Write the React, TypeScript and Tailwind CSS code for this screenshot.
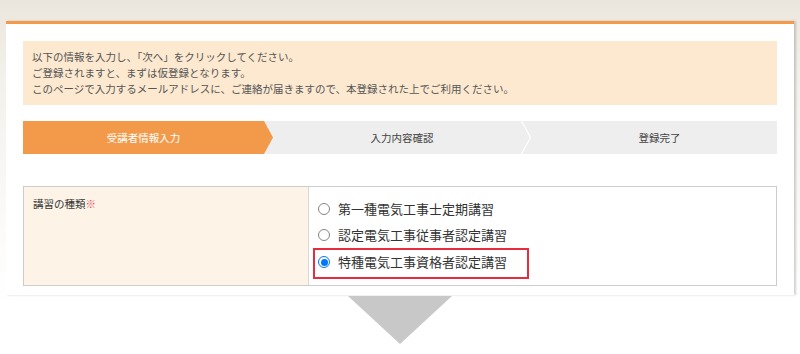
import React from "react";

const font = { fontFamily: '"Noto Sans CJK JP", "Noto Sans", sans-serif' };

function Radio({ checked }: { checked?: boolean }) {
  return checked ? (
    <span className="w-[12px] h-[12px] rounded-full border border-[#0075ff] bg-white flex items-center justify-center shrink-0">
      <span className="w-[7px] h-[7px] rounded-full bg-[#0075ff]" />
    </span>
  ) : (
    <span className="w-[12px] h-[12px] rounded-full border border-[#858585] bg-white shrink-0" />
  );
}

export default function App() {
  return (
    <div
      className="w-[800px] h-[354px] overflow-hidden bg-[linear-gradient(to_bottom,#ebe6dd_0px,#f4f1ec_80px,#ffffff_300px)] pt-[21px] px-[6px]"
      style={font}
    >
      <div className="bg-white border-t-[3px] border-[#f39a4a] shadow-[2px_0_2px_rgba(0,0,0,0.18)] px-[17px] pt-[17px] pb-[9px]">
        <div className="bg-[#fce9d0] h-[64px] px-[9px] py-[8px] text-[10.5px] leading-[16px] text-[#555]">
          <p>以下の情報を入力し、「次へ」をクリックしてください。</p>
          <p>ご登録されますと、まずは仮登録となります。</p>
          <p>このページで入力するメールアドレスに、ご連絡が届きますので、本登録された上でご利用ください。</p>
        </div>

        <div className="mt-[16px] h-[33px] bg-[#eeeeee] flex text-[10.5px]">
          <div className="w-[250px] h-full bg-[#f39a4a] [clip-path:polygon(0_0,241px_0,100%_50%,241px_100%,0_100%)] flex items-center justify-center pr-[9px] text-white">
            受講者情報入力
          </div>
          <div className="relative w-[258px] h-full flex items-center justify-center text-[#444]">
            入力内容確認
            <svg className="absolute right-0 top-0" width="10" height="33" viewBox="0 0 10 33">
              <polyline points="0.5,0 9.5,16.5 0.5,33" fill="none" stroke="#ffffff" strokeWidth="1.2" />
            </svg>
          </div>
          <div className="flex-1 h-full flex items-center justify-center pl-[11px] text-[#444]">
            登録完了
          </div>
        </div>

        <div className="mt-[32px] border border-[#cccccc] flex h-[100px]">
          <div className="w-[285px] bg-[#fdf3e7] border-r border-[#d9d9d9] px-[9px] pt-[9px] text-[10.5px] leading-[16px] text-[#333]">
            講習の種類<span className="text-[#e8474f]">※</span>
          </div>
          <div className="flex-1 pl-[4px] pt-[9px] text-[13px] text-[#333]">
            <div className="h-[26px] flex items-center gap-[8px] pl-[5px]">
              <Radio />
              <span>第一種電気工事士定期講習</span>
            </div>
            <div className="h-[26px] flex items-center gap-[8px] pl-[5px]">
              <Radio />
              <span>認定電気工事従事者認定講習</span>
            </div>
            <div className="w-[216px] h-[31px] border-2 border-[#e52d3d] flex items-center gap-[8px] pl-[3px] pb-[3px]">
              <Radio checked />
              <span>特種電気工事資格者認定講習</span>
            </div>
          </div>
        </div>
      </div>

      <div className="flex justify-center mt-[1px]">
        <svg width="104" height="48" viewBox="0 0 104 48">
          <polygon points="0,0 104,0 52,48" fill="#c8c8c8" />
        </svg>
      </div>
    </div>
  );
}
